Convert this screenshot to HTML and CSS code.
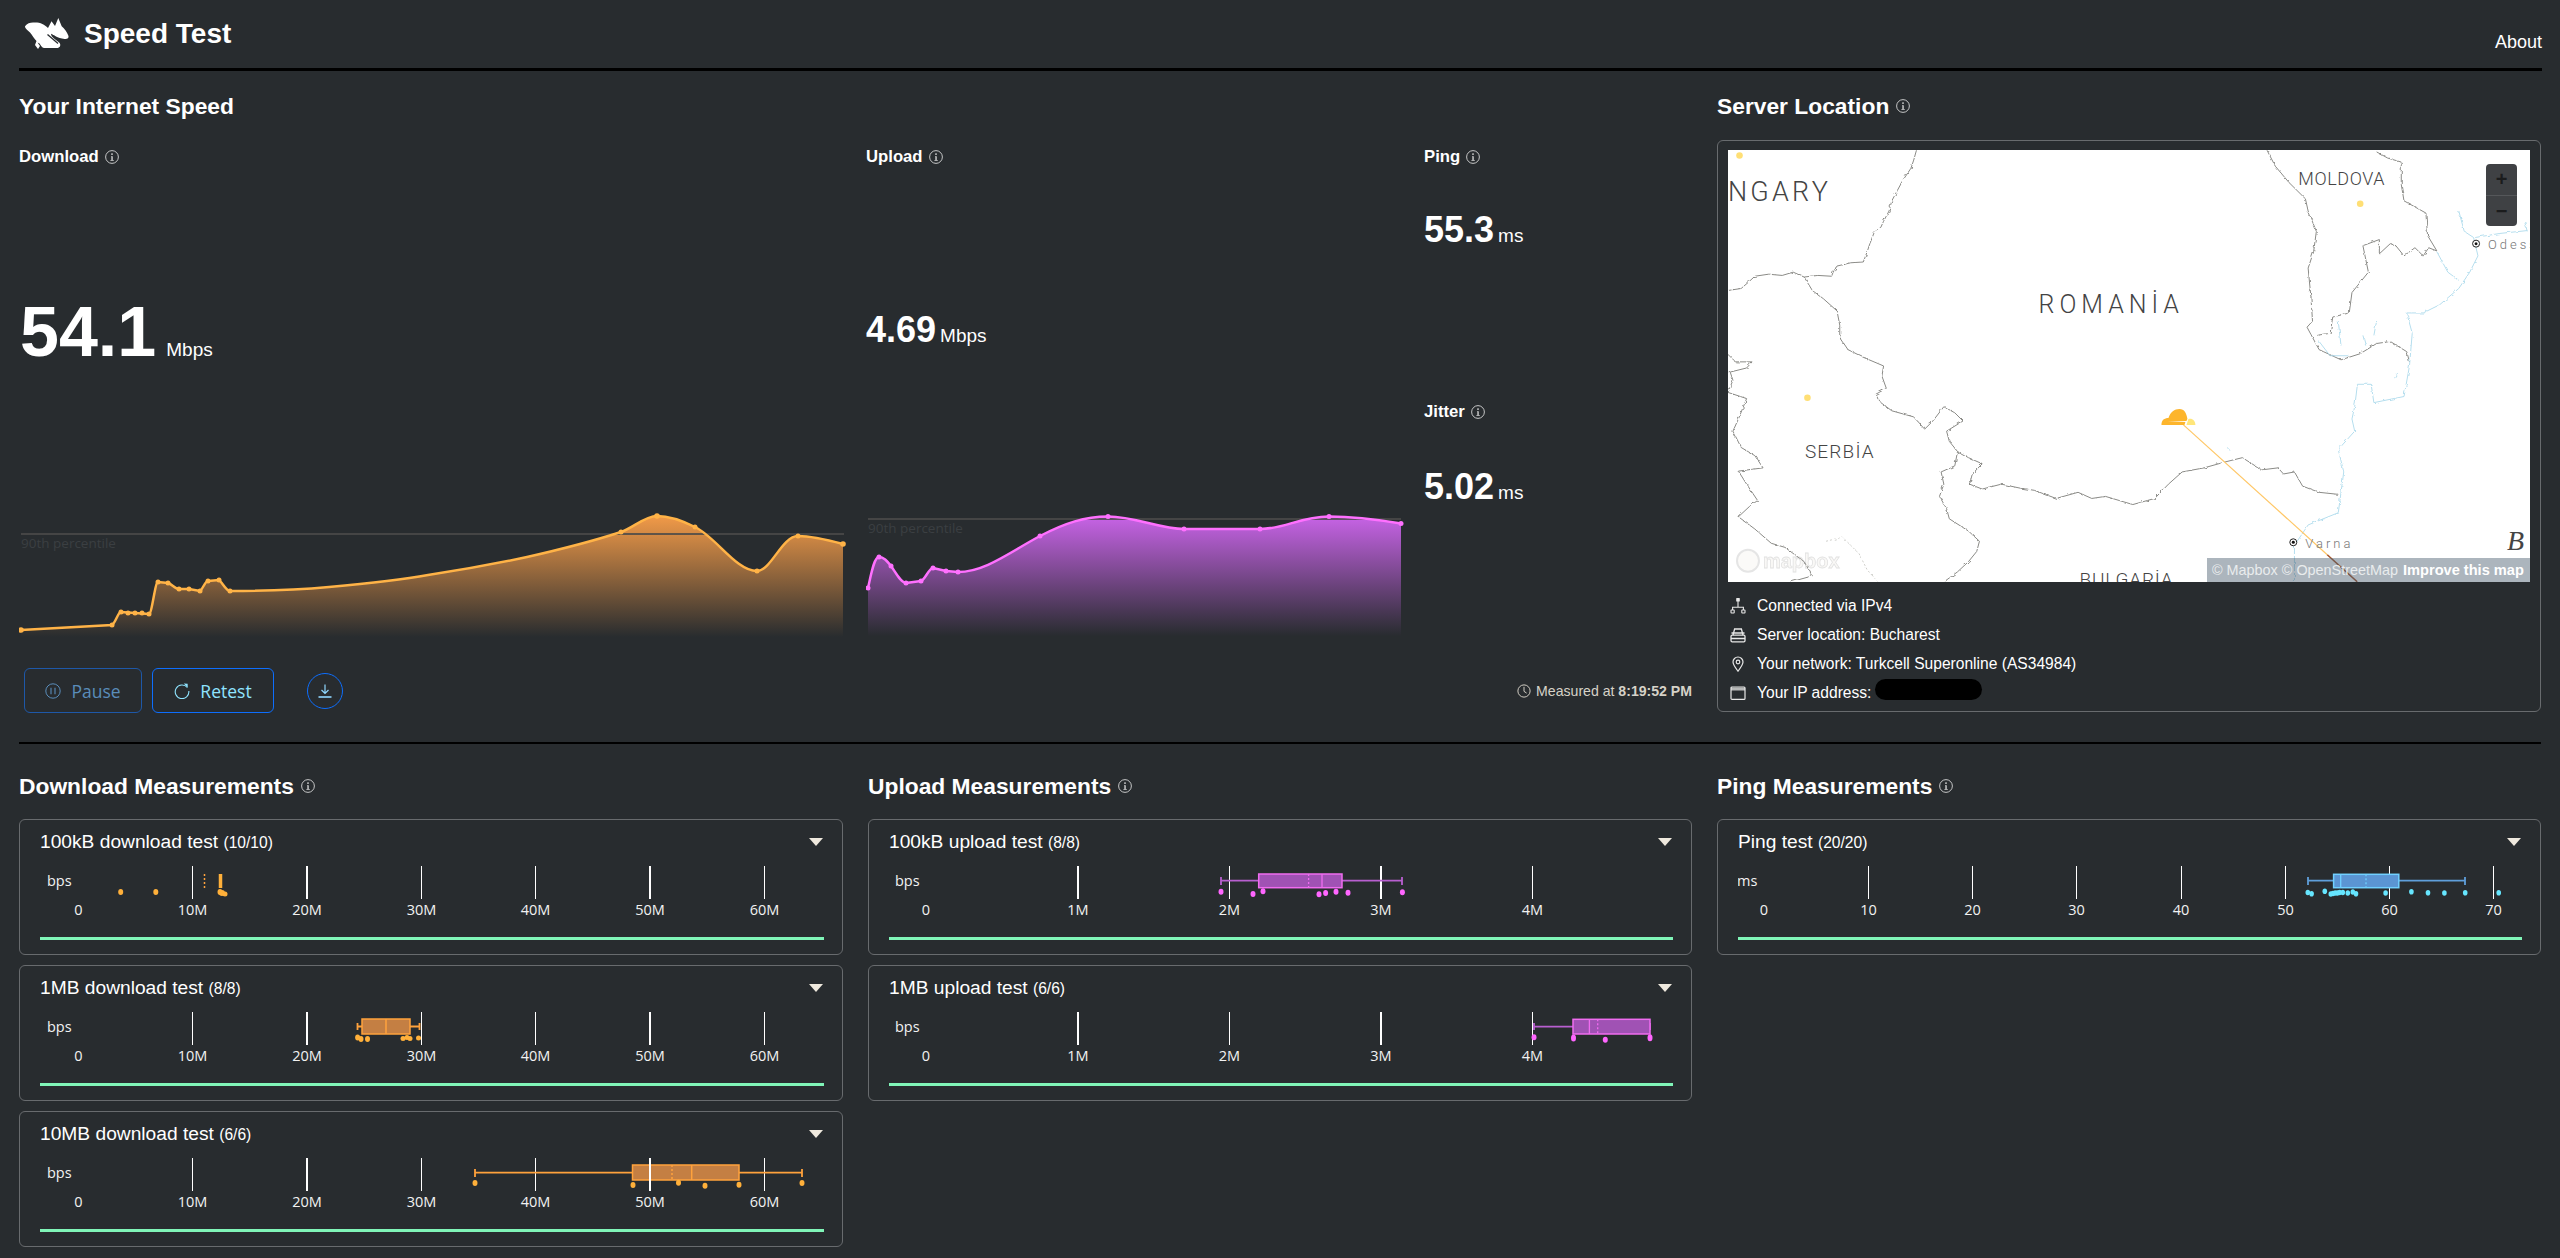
FILE: index.html
```html
<!DOCTYPE html>
<html lang="en">
<head>
<meta charset="utf-8">
<title>Speed Test</title>
<link rel="stylesheet" href="styles.css">
</head>
<body>
<svg class="sprite" xmlns="http://www.w3.org/2000/svg">
  <symbol id="i-info" viewBox="0 0 16 16"><circle cx="8" cy="8" r="7.3" fill="none" stroke="currentColor" stroke-width="1"/><path d="M7 7h1.8v4.4H10v.9H6.2v-.9h1.1V7.9H7z" fill="currentColor"/><circle cx="8" cy="4.7" r="1" fill="currentColor"/></symbol>
  <symbol id="i-tree" viewBox="0 0 16 16"><g fill="none" stroke="currentColor" stroke-width="1.1"><rect x="1" y="12" width="3.2" height="3" rx=".5"/><rect x="11.8" y="12" width="3.2" height="3" rx=".5"/><path d="M2.6 12V9.2h10.8V12M8 9.2V3"/></g><rect x="6.2" y="0" width="3.6" height="3.6" rx=".6" fill="currentColor"/></symbol>
  <symbol id="i-hdd" viewBox="0 0 16 16"><g fill="none" stroke="currentColor" stroke-width="1.3"><rect x="1" y="8.2" width="14" height="6.6" rx="1.2"/><path d="M1 11.5h14M3 8.2l1.6-6.2h6.8L13 8.2M1.500 6h13"/></g></symbol>
  <symbol id="i-pin" viewBox="0 0 16 16"><path d="M8 15.200C5.200 11.400 3 8.600 3 6a5 5 0 0 1 10 0c0 2.600-2.200 5.400-5 9.200z" fill="none" stroke="currentColor" stroke-width="1.200"/><circle cx="8" cy="6" r="1.800" fill="none" stroke="currentColor" stroke-width="1.200"/></symbol>
  <symbol id="i-window" viewBox="0 0 16 16"><rect x="1" y="2" width="14" height="12.400" rx="1" fill="none" stroke="currentColor" stroke-width="1.200"/><path d="M1 2.600h14v2.900H1z" fill="currentColor" opacity=".75"/></symbol>
  <symbol id="i-clock" viewBox="0 0 16 16"><circle cx="8" cy="8" r="7" fill="none" stroke="currentColor" stroke-width="1.100"/><path d="M8 3.200V8.400l3 2" fill="none" stroke="currentColor" stroke-width="1.100"/></symbol>
</svg>

<header class="nav">
  <svg class="logo" viewBox="0 0 44 31" xmlns="http://www.w3.org/2000/svg"><path fill="#fff" d="M0 8.300C2 5.500 5 4.500 8 4.500C15 4 19 6 23 10L26.500 3.300 30 8 33.300 0 36.700 8.300C39 10 42 14 43.500 18C44 20 42 21.500 39.500 21C36 20.500 33 19.500 31 18.500C29 17.300 27.500 16.500 26 15.800C26 17.500 27 19 29 20.500L33.500 24C35.500 25 35.500 27 35 28.500L33 30H19C17 30 15.500 27 14.500 25.500L12.500 24.500 15 28 13 31 10 27 11.500 23C9.500 21 7 17 5 14.500C3 12.500 0 11 0 8.300Z"/><path fill="none" stroke="#282c2f" stroke-width="1.300" d="M22.500 16.500L33 25.500"/></svg>
  <h1 class="brand">Speed Test</h1>
  <a class="about">About</a>
</header>

<main class="page">
  <section class="top">
    <div class="speed">
      <h2 class="heading">Your Internet Speed</h2>
      <div class="metrics">
        <div class="metric">
          <div class="label">Download <svg class="info"><use href="#i-info"/></svg></div>
          <div class="value value-xl">54.1<span class="unit">Mbps</span></div>
          <svg class="chart chart-dl" viewBox="19 510 828 130" xmlns="http://www.w3.org/2000/svg">
            <defs><linearGradient id="g-dl" x1="0" y1="0" x2="0" y2="1"><stop offset="0" stop-color="#f19a48"/><stop offset="1" stop-color="#f19a48" stop-opacity="0"/></linearGradient></defs>
            <path class="area" fill="url(#g-dl)" d="M21 630L112 625C116 622 118 612 121 612L149 614C152 614 155 582 158 582L168 583C172 584 175 589 179 589L189 589L200 591C203 589 205 581 208 581L219 580C222 582 226 591 230 591C263 591 296 590 329 587C362 584 395 581 428 575C461 570 494 564 527 557C558 550 590 542 621 532C633 528 645 516 657 516C670 516 683 521 695 527C716 537 736 571 757 571C771 571 782 536 798 536C813 536 828 540 843 544L843 637L21 637Z"/>
            <path class="pct" d="M21 534H844"/>
            <text class="pct-text" x="21" y="548">90th percentile</text>
            <path class="curve curve-dl" d="M21 630L112 625C116 622 118 612 121 612L149 614C152 614 155 582 158 582L168 583C172 584 175 589 179 589L189 589L200 591C203 589 205 581 208 581L219 580C222 582 226 591 230 591C263 591 296 590 329 587C362 584 395 581 428 575C461 570 494 564 527 557C558 550 590 542 621 532C633 528 645 516 657 516C670 516 683 521 695 527C716 537 736 571 757 571C771 571 782 536 798 536C813 536 828 540 843 544"/>
            <g class="pts-dl"><circle cx="21" cy="630" r="2.800"/><circle cx="112" cy="625" r="2.500"/><circle cx="121" cy="612" r="2.500"/><circle cx="128" cy="613" r="2.500"/><circle cx="135" cy="613" r="2.500"/><circle cx="142" cy="613" r="2.500"/><circle cx="149" cy="614" r="2.500"/><circle cx="158" cy="582" r="2.500"/><circle cx="168" cy="583" r="2.500"/><circle cx="179" cy="589" r="2.500"/><circle cx="189" cy="589" r="2.500"/><circle cx="200" cy="591" r="2.500"/><circle cx="208" cy="581" r="2.500"/><circle cx="219" cy="580" r="2.500"/><circle cx="230" cy="591" r="2.500"/><circle cx="621" cy="532" r="2.500"/><circle cx="657" cy="516" r="2.800"/><circle cx="695" cy="527" r="2.500"/><circle cx="757" cy="571" r="2.500"/><circle cx="798" cy="536" r="2.500"/><circle cx="843" cy="544" r="2.800"/></g>
          </svg>
        </div>
        <div class="metric">
          <div class="label">Upload <svg class="info"><use href="#i-info"/></svg></div>
          <div class="value value-lg up-value">4.69<span class="unit">Mbps</span></div>
          <svg class="chart chart-ul" viewBox="866 510 540 130" xmlns="http://www.w3.org/2000/svg">
            <defs><linearGradient id="g-ul" x1="0" y1="0" x2="0" y2="1"><stop offset="0" stop-color="#c763e6"/><stop offset="1" stop-color="#c763e6" stop-opacity="0"/></linearGradient></defs>
            <path class="area" fill="url(#g-ul)" d="M868 588C871 575 874 557 879 557C884 557 887 561 891 566C896 573 901 583 906 583L921 581C925 580 929 568 933 568L946 571L958 572C985 572 1010 552 1040 536C1065 523 1085 516.500 1108 516.500C1135 516.500 1160 529 1184 529L1260 529C1285 529 1300 516.500 1329 516.500C1355 516.500 1380 520 1401 523.500L1401 636L868 636Z"/>
            <path class="pct" d="M868 519H1401"/>
            <text class="pct-text" x="868" y="533">90th percentile</text>
            <path class="curve curve-ul" d="M868 588C871 575 874 557 879 557C884 557 887 561 891 566C896 573 901 583 906 583L921 581C925 580 929 568 933 568L946 571L958 572C985 572 1010 552 1040 536C1065 523 1085 516.500 1108 516.500C1135 516.500 1160 529 1184 529L1260 529C1285 529 1300 516.500 1329 516.500C1355 516.500 1380 520 1401 523.500"/>
            <g class="pts-ul"><circle cx="868" cy="588" r="2.500"/><circle cx="879" cy="557" r="2.500"/><circle cx="891" cy="566" r="2.500"/><circle cx="906" cy="583" r="2.500"/><circle cx="921" cy="581" r="2.500"/><circle cx="933" cy="568" r="2.500"/><circle cx="946" cy="571" r="2.500"/><circle cx="958" cy="572" r="2.500"/><circle cx="1040" cy="536" r="2.500"/><circle cx="1108" cy="516.500" r="2.500"/><circle cx="1184" cy="529" r="2.500"/><circle cx="1260" cy="529" r="2.500"/><circle cx="1329" cy="516.500" r="2.500"/><circle cx="1401" cy="523.500" r="2.500"/></g>
          </svg>
        </div>
        <div class="metric metric-ping">
          <div class="label">Ping <svg class="info"><use href="#i-info"/></svg></div>
          <div class="value value-lg ping-value">55.3<span class="unit">ms</span></div>
          <div class="label jitter-label">Jitter <svg class="info"><use href="#i-info"/></svg></div>
          <div class="value value-lg jitter-value">5.02<span class="unit">ms</span></div>
        </div>
      </div>
      <div class="actions">
        <button class="btn btn-dim"><svg class="btn-icon" viewBox="0 0 16 16"><circle cx="8" cy="8" r="7.200" fill="none" stroke="currentColor" stroke-width="1"/><path d="M6 4.800v6.400M10 4.800v6.400" stroke="currentColor" stroke-width="1.100"/></svg>Pause</button>
        <button class="btn btn-on"><svg class="btn-icon" viewBox="0 0 16 16"><path d="M13.300 4.500A6.800 6.800 0 1 0 14.800 8" fill="none" stroke="currentColor" stroke-width="1.100"/><path d="M9.800 0.500L13.600 0.800L13.800 4.800Z" fill="currentColor"/></svg>Retest</button>
        <button class="btn-round" aria-label="Download results"><svg class="round-icon" viewBox="0 0 16 16"><path d="M8 1.500V10M4.500 7L8 10.500L11.500 7" fill="none" stroke="currentColor" stroke-width="1.200"/><path d="M1.500 14h13" stroke="currentColor" stroke-width="1.600"/></svg></button>
        <div class="measured"><svg class="clock"><use href="#i-clock"/></svg>Measured at <b>8:19:52 PM</b></div>
      </div>
    </div>

    <div class="server">
      <h2 class="heading">Server Location <svg class="info"><use href="#i-info"/></svg></h2>
      <div class="server-card">
        <div class="map">
          <svg class="map-svg" viewBox="0 0 803 432" xmlns="http://www.w3.org/2000/svg">
            <defs><filter id="wiggle" x="-5%" y="-5%" width="110%" height="110%"><feTurbulence type="fractalNoise" baseFrequency=".09" numOctaves="2" seed="4"/><feDisplacementMap in="SourceGraphic" scale="7"/></filter></defs>
            <g transform="scale(.5485 .4082) translate(-51 -171)">
              <g filter="url(#wiggle)">
              <path class="bd" d="M395 171L390 195 385 215 370 245 360 270 350 295 345 320 335 345 330 360 318 372 310 400 305 420 298 445 275 447 250 455 243 470 240 480 215 478 190 482 170 470 150 478 125 475 100 480 88 495 75 510 51 515"/>
              <path class="bd" d="M190 482L205 515 225 535 250 565 255 600 255 630 270 660 300 680 335 700 332 725 340 755 320 770 330 790 350 810 390 825 410 855 425 835 445 800 465 815 480 835 450 860 455 885 470 910"/>
              <path class="bd" d="M470 910L490 925 515 940 497 965 492 990 515 1002 550 990 585 1000 610 1005 650 1025 690 1010 715 1025 740 1020 790 1040 830 1025 855 990 880 960 920 950 960 935 990 925 1025 955 1055 950 1065 965 1085 960 1100 995 1130 1010 1165 1015"/>
              <path class="bd" d="M470 910L465 945 440 960 445 990 437 1020 450 1050 455 1075 490 1105 510 1130 505 1155 490 1180 470 1205 445 1230"/>
              <path class="bd" d="M51 672L65 690 95 690 85 705 55 715 60 735 51 765 85 780 70 830 60 860 75 900 100 920 115 950 70 958 85 990 105 1030 90 1045 70 1070 100 1100 130 1135 155 1145 190 1180 205 1215 165 1230"/>
              <path class="bd" d="M1035 171L1050 210 1075 250 1105 290 1110 320 1125 370 1120 420 1110 460 1115 530 1118 590 1108 605 1130 660 1170 685 1205 670 1235 645 1260 640 1290 665 1295 690"/>
              <path class="bd" d="M1235 175L1255 190 1280 200 1280 255 1285 295 1325 325 1328 380 1345 418 1330 410 1320 430 1305 410 1285 430 1270 405 1260 400 1240 425 1240 390 1210 405 1220 470 1190 520 1185 570 1155 580 1150 620 1125 625"/>
              <path class="bd-dot" d="M230 1130L260 1120 290 1160 305 1200 325 1230"/>
              <path class="water" d="M1385 320L1395 370 1412 385 1420 430 1405 470 1385 510 1350 550 1320 570 1290 570 1300 620 1295 700 1285 775 1230 790 1225 745 1200 745 1195 800 1190 830 1195 860 1165 905 1175 960 1165 1060 1110 1090 1085 1140 1085 1230"/>
              <path class="water" d="M1415 385L1460 375 1510 368M1345 420L1365 470 1385 490M1165 590L1170 650M1235 590L1230 625M1210 625L1215 650M1130 640L1150 675 1185 675M1272 715L1268 730M1505 345L1510 370M962 900L968 908"/>
              </g>
              <ellipse class="city" cx="72" cy="184" rx="6" ry="8"/><ellipse class="city" cx="1205" cy="302" rx="6" ry="8"/><ellipse class="city" cx="196" cy="778" rx="6" ry="8"/>
            </g>
            <path class="route" d="M456 275L600 405"/><path class="route route-dark" d="M600 405L630 432"/>
            <text class="map-big" x="0" y="51">NGARY</text>
            <text class="map-ro" x="311" y="163">ROMANİA</text>
            <text class="map-md" x="571" y="35">MOLDOVA</text>
            <text class="map-rs" x="77" y="308">SERBİA</text>
            <text class="map-bg" x="352" y="436">BULGARİA</text>
            <circle class="dot-o" cx="749" cy="93.500" r="3.500"/><circle class="dot-i" cx="749" cy="93.500" r="1.500"/>
            <circle class="dot-o" cx="566" cy="392.500" r="3.500"/><circle class="dot-i" cx="566" cy="392.500" r="1.500"/>
            <text class="map-city" x="761" y="99">Odess</text>
            <text class="map-city" x="578" y="398">Varna</text>
            <text class="map-b" x="780" y="400">B</text>
            <path fill="#fdb52c" d="M434 275C434 270 437 268 441 268C443 262 447 259 452 259C457 259 459 263 460 269L459 271H440L458 272L457 275Z"/>
            <path fill="#ffe67a" d="M461 269C465 268 468 271 468 275H459L460 272Z"/>
            <g class="mb-logo"><circle cx="20" cy="411" r="11"/><text x="35" y="418">mapbox</text></g>
          </svg>
          <div class="zoom-ctl"><span class="zoom-btn">+</span><span class="zoom-btn zoom-minus">−</span></div>
          <div class="attrib"><span>© Mapbox</span> <span>© OpenStreetMap</span> <b>Improve this map</b></div>
        </div>
        <ul class="facts">
          <li><svg class="fact-icon"><use href="#i-tree"/></svg>Connected via IPv4</li>
          <li><svg class="fact-icon"><use href="#i-hdd"/></svg>Server location: Bucharest</li>
          <li><svg class="fact-icon"><use href="#i-pin"/></svg>Your network: Turkcell Superonline (AS34984)</li>
          <li><svg class="fact-icon"><use href="#i-window"/></svg>Your IP address: <span class="redact"></span></li>
        </ul>
      </div>
    </div>
  </section>

  <hr class="rule">

  <section class="bottom">
    <div class="col">
      <h2 class="heading">Download Measurements <svg class="info"><use href="#i-info"/></svg></h2>
      <article class="card">
        <div class="card-head"><span class="card-title">100kB download test <small>(10/10)</small></span><i class="caret"></i></div>
        <svg class="plot" viewBox="40 37 784 74" xmlns="http://www.w3.org/2000/svg">
          <text class="ax" x="47" y="67">bps</text>
          <path class="tick" d="M192.500 47V80M421.500 47V80M535.500 47V80M764.500 47V80"/><path class="tick thick" d="M307 47V80M650 47V80"/>
          <g class="ax-x"><text x="78.400" y="96">0</text><text x="192.500" y="96">10M</text><text x="307" y="96">20M</text><text x="421.500" y="96">30M</text><text x="535.500" y="96">40M</text><text x="650" y="96">50M</text><text x="764.500" y="96">60M</text></g>
          <path class="mean-o" d="M204.500 55V69"/><path class="solid-o" d="M220.500 55V69"/>
          <g class="dots-o"><ellipse cx="120.700" cy="73" rx="2.500" ry="3"/><ellipse cx="155.800" cy="73" rx="2.500" ry="3"/><ellipse cx="220" cy="73" rx="2.500" ry="3"/><ellipse cx="222" cy="74" rx="3" ry="3"/><ellipse cx="225" cy="75" rx="2.500" ry="2.500"/></g>
        </svg>
        <div class="progress"></div>
      </article>
      <article class="card">
        <div class="card-head"><span class="card-title">1MB download test <small>(8/8)</small></span><i class="caret"></i></div>
        <svg class="plot" viewBox="40 37 784 74" xmlns="http://www.w3.org/2000/svg">
          <text class="ax" x="47" y="67">bps</text>
          <path class="tick" d="M192.500 47V80M421.500 47V80M535.500 47V80M764.500 47V80"/><path class="tick thick" d="M307 47V80M650 47V80"/>
          <g class="ax-x"><text x="78.400" y="96">0</text><text x="192.500" y="96">10M</text><text x="307" y="96">20M</text><text x="421.500" y="96">30M</text><text x="535.500" y="96">40M</text><text x="650" y="96">50M</text><text x="764.500" y="96">60M</text></g>
          <path class="whisk-o" d="M357.500 58V65M357.500 61.500H362M410 61.500H419.500M419.500 58V65"/>
          <rect class="box-o" x="362" y="54" width="48" height="15"/>
          <path class="med-o" d="M386 54V69"/>
          <g class="dots-o"><ellipse cx="357.600" cy="72.500" rx="2.500" ry="3"/><ellipse cx="361" cy="74" rx="2.500" ry="3"/><ellipse cx="367.500" cy="74" rx="2.500" ry="3"/><ellipse cx="403" cy="73.500" rx="2.500" ry="2.500"/><ellipse cx="407" cy="72.500" rx="2.500" ry="2.500"/><ellipse cx="410" cy="73.500" rx="2.500" ry="2.500"/><ellipse cx="418.500" cy="73" rx="2.500" ry="2.500"/></g>
        </svg>
        <div class="progress"></div>
      </article>
      <article class="card">
        <div class="card-head"><span class="card-title">10MB download test <small>(6/6)</small></span><i class="caret"></i></div>
        <svg class="plot" viewBox="40 37 784 74" xmlns="http://www.w3.org/2000/svg">
          <text class="ax" x="47" y="67">bps</text>
          <path class="tick" d="M192.500 47V80M421.500 47V80M535.500 47V80M764.500 47V80"/><path class="tick thick" d="M307 47V80"/>
          <g class="ax-x"><text x="78.400" y="96">0</text><text x="192.500" y="96">10M</text><text x="307" y="96">20M</text><text x="421.500" y="96">30M</text><text x="535.500" y="96">40M</text><text x="650" y="96">50M</text><text x="764.500" y="96">60M</text></g>
          <path class="whisk-o" d="M475 58V66M475 61.700H632.500M739 61.700H802M802 58V66"/>
          <rect class="box-o" x="632.500" y="54" width="106.500" height="15"/>
          <path class="tick thick" d="M650 47V80"/>
          <path class="med-o" d="M691.700 54V69"/><path class="mean-o" d="M672 54V69"/>
          <g class="dots-o"><ellipse cx="475" cy="72" rx="2.500" ry="3"/><ellipse cx="633" cy="74" rx="2.500" ry="3"/><ellipse cx="678.500" cy="71.700" rx="2.500" ry="3"/><ellipse cx="705" cy="74.700" rx="2.500" ry="3"/><ellipse cx="739" cy="73.700" rx="2.500" ry="3"/><ellipse cx="802" cy="72" rx="2.500" ry="3"/></g>
        </svg>
        <div class="progress"></div>
      </article>
    </div>

    <div class="col">
      <h2 class="heading">Upload Measurements <svg class="info"><use href="#i-info"/></svg></h2>
      <article class="card">
        <div class="card-head"><span class="card-title">100kB upload test <small>(8/8)</small></span><i class="caret"></i></div>
        <svg class="plot" viewBox="889 37 784 74" xmlns="http://www.w3.org/2000/svg">
          <text class="ax" x="895" y="67">bps</text>
          <path class="tick" d="M1229.500 47V80M1532.500 47V80"/><path class="tick thick" d="M1078 47V80M1381 47V80"/>
          <g class="ax-x"><text x="926" y="96">0</text><text x="1078" y="96">1M</text><text x="1229.500" y="96">2M</text><text x="1381" y="96">3M</text><text x="1532.500" y="96">4M</text></g>
          <path class="whisk-p" d="M1221 58V66M1221 61.700H1258.700M1342 61.700H1402M1402 58V66"/>
          <rect class="box-p" x="1258.700" y="55" width="83.300" height="13.700"/>
          <path class="med-p" d="M1322 55V68.700"/><path class="mean-p" d="M1308.600 55V68.700"/>
          <g class="dots-p"><ellipse cx="1221" cy="72.700" rx="2.500" ry="3"/><ellipse cx="1253" cy="75" rx="2.500" ry="3"/><ellipse cx="1263" cy="72.300" rx="2.500" ry="3"/><ellipse cx="1319" cy="75.300" rx="2.500" ry="3"/><ellipse cx="1325.600" cy="74" rx="2.500" ry="3"/><ellipse cx="1336" cy="72.700" rx="2.500" ry="3"/><ellipse cx="1348" cy="73.700" rx="2.500" ry="3"/><ellipse cx="1402.400" cy="73.300" rx="2.500" ry="3"/></g>
        </svg>
        <div class="progress"></div>
      </article>
      <article class="card">
        <div class="card-head"><span class="card-title">1MB upload test <small>(6/6)</small></span><i class="caret"></i></div>
        <svg class="plot" viewBox="889 37 784 74" xmlns="http://www.w3.org/2000/svg">
          <text class="ax" x="895" y="67">bps</text>
          <path class="tick" d="M1229.500 47V80M1532.500 47V80"/><path class="tick thick" d="M1078 47V80M1381 47V80"/>
          <g class="ax-x"><text x="926" y="96">0</text><text x="1078" y="96">1M</text><text x="1229.500" y="96">2M</text><text x="1381" y="96">3M</text><text x="1532.500" y="96">4M</text></g>
          <path class="whisk-p" d="M1534 58V65M1534 61.700H1573M1650 58V65"/>
          <rect class="box-p" x="1573" y="54.300" width="77" height="14.700"/>
          <path class="med-p" d="M1589.400 54.300V69"/><path class="mean-p" d="M1597.700 54.300V69"/>
          <g class="dots-p"><ellipse cx="1534" cy="72.300" rx="2.500" ry="3"/><ellipse cx="1573.500" cy="73" rx="2.500" ry="3.500"/><ellipse cx="1605.300" cy="74.700" rx="2.500" ry="3"/><ellipse cx="1650" cy="72.700" rx="2.500" ry="3.500"/></g>
        </svg>
        <div class="progress"></div>
      </article>
    </div>

    <div class="col">
      <h2 class="heading">Ping Measurements <svg class="info"><use href="#i-info"/></svg></h2>
      <article class="card">
        <div class="card-head"><span class="card-title">Ping test <small>(20/20)</small></span><i class="caret"></i></div>
        <svg class="plot" viewBox="1738 37 784 74" xmlns="http://www.w3.org/2000/svg">
          <text class="ax" x="1737" y="67">ms</text>
          <path class="tick" d="M1868.500 47V80M1972.500 47V80M2076.500 47V80M2181.500 47V80M2285.500 47V80M2389.500 47V80M2493.500 47V80"/>
          <g class="ax-x"><text x="1764" y="96">0</text><text x="1868.500" y="96">10</text><text x="1972.500" y="96">20</text><text x="2076.500" y="96">30</text><text x="2181" y="96">40</text><text x="2285.500" y="96">50</text><text x="2389.500" y="96">60</text><text x="2493.500" y="96">70</text></g>
          <path class="whisk-b" d="M2308 58V66M2308 61.700H2333.600M2398.800 61.700H2465M2465 58V66"/>
          <rect class="box-b" x="2333.600" y="55.300" width="65.200" height="13.400"/>
          <path class="med-b" d="M2340.700 55.300V68.700"/><path class="mean-b" d="M2366 55.300V68.700"/>
          <g class="dots-b"><ellipse cx="2307.800" cy="73.500" rx="2.300" ry="2.800"/><ellipse cx="2311.600" cy="74.700" rx="2.300" ry="2.800"/><ellipse cx="2324.800" cy="72.300" rx="2.300" ry="2.800"/><ellipse cx="2330.800" cy="75" rx="2.300" ry="2.800"/><ellipse cx="2333" cy="74.500" rx="2.300" ry="2.800"/><ellipse cx="2335.200" cy="74" rx="2.300" ry="2.800"/><ellipse cx="2337.400" cy="74" rx="2.300" ry="2.800"/><ellipse cx="2339.600" cy="73.500" rx="2.300" ry="2.800"/><ellipse cx="2342.800" cy="73.500" rx="2.300" ry="2.800"/><ellipse cx="2347.800" cy="74" rx="2.300" ry="2.800"/><ellipse cx="2352.800" cy="73" rx="2.300" ry="2.800"/><ellipse cx="2356" cy="74.700" rx="2.300" ry="2.800"/><ellipse cx="2385.600" cy="74" rx="2.300" ry="2.800"/><ellipse cx="2411.400" cy="72.700" rx="2.300" ry="2.800"/><ellipse cx="2428" cy="73.700" rx="2.300" ry="2.800"/><ellipse cx="2444.400" cy="74" rx="2.300" ry="2.800"/><ellipse cx="2465.200" cy="73.700" rx="2.300" ry="2.800"/><ellipse cx="2498.700" cy="73.700" rx="2.300" ry="2.800"/></g>
        </svg>
        <div class="progress"></div>
      </article>
    </div>
  </section>
</main>
</body>
</html>
```
FILE: styles.css
```css
* { box-sizing: border-box; }
html, body { margin: 0; padding: 0; }
body {
  background: #282c2f;
  color: #fff;
  font-family: "Liberation Sans", Arial, sans-serif;
  min-height: 1258px;
  overflow: hidden;
}
.sprite { display: none; }

/* nav */
.nav {
  display: flex;
  align-items: center;
  height: 71px;
  margin: 0 18px 0 19px;
  border-bottom: 3px solid #000;
}
.logo { width: 44px; height: 31px; margin: -1px 0 0 6px; flex: none; }
.brand { margin: 0 0 0 15px; font-size: 28px; line-height: 34px; font-weight: 700; }
.about { margin: 16px 0 0 auto; font-size: 18px; line-height: 22px; color: #fff; }

/* page layout */
.page { padding: 21px 19px 0; }
.top, .bottom { display: grid; grid-template-columns: repeat(3, 824px); column-gap: 25px; }
.speed { grid-column: span 2; }
.server { grid-column: 3; }
.heading { margin: 0; font-size: 22.8px; line-height: 28px; font-weight: 700; display: flex; align-items: center; gap: 7px; }
.info { width: 14px; height: 14px; flex: none; color: #ddd; }

/* metrics */
.metrics { display: grid; grid-template-columns: 847px 557px 1fr; margin-top: 27px; }
.metric { display: flex; flex-direction: column; min-width: 0; }
.metric-ping { padding-left: 1px; }
.label { display: flex; align-items: center; gap: 6px; height: 20px; font-size: 16.7px; font-weight: 700; }
.value { font-weight: 700; white-space: nowrap; }
.value-xl { font-size: 70px; line-height: 80px; margin: 125px 0 0 1px; }
.value-lg { font-size: 36px; line-height: 40px; }
.unit { font-size: 19px; line-height: 1; font-weight: 400; margin-left: 10px; }
.value-lg .unit { margin-left: 4px; }
.up-value { margin-top: 143px; }
.ping-value { margin-top: 43px; }
.jitter-label { margin-top: 152px; }
.jitter-value { margin-top: 45px; }
.chart { display: block; height: 130px; }
.chart-dl { width: 828px; margin-top: 138px; }
.chart-ul { width: 540px; margin-top: 160px; }
.area { stroke: none; }
.pct { stroke: #4a4a49; stroke-width: 2; fill: none; opacity: .85; }
.pct-text { font-family: "Open Sans", sans-serif; font-size: 13.5px; fill: #3b3f42; }
.curve { fill: none; stroke-width: 2.5; }
.curve-dl { stroke: #ffb347; }
.curve-ul { stroke: #ff70ff; }
.pts-dl { fill: #ffb347; }
.pts-ul { fill: #ff70ff; }

/* actions */
.actions { display: flex; align-items: center; height: 45px; margin-top: 28px; padding-left: 5px; }
.btn {
  display: flex; align-items: center; justify-content: center; gap: 10px;
  height: 45px; background: transparent; border-radius: 6px; border: 1px solid;
  font-family: "Open Sans", sans-serif; font-size: 17.5px;
}
.btn-dim { width: 118px; border-color: #1e58a8; color: #5a8dba; }
.btn-on { width: 122px; margin-left: 10px; border-color: #0d6efd; color: #8fe4ff; }
.btn-icon { width: 16px; height: 16px; flex: none; }
.btn-round {
  display: flex; align-items: center; justify-content: center; padding: 0;
  width: 36px; height: 36px; margin-left: 33px; border-radius: 50%;
  background: transparent; border: 1px solid #0d6efd; color: #8fd8ff;
}
.round-icon { width: 16px; height: 16px; }
.measured { margin-left: auto; display: flex; align-items: center; white-space: pre; font-size: 14.1px; color: #d6d2c8; }
.measured b { font-weight: 700; }
.clock { width: 14px; height: 14px; margin-right: 5px; }

/* server card */
.server-card {
  margin-top: 20px; height: 572px; padding: 9px 10px 0;
  border: 1px solid #686b6e; border-radius: 6px;
}
.map { position: relative; height: 432px; background: #fff; overflow: hidden; }
.map-svg { display: block; width: 100%; height: 100%; }
.bd { fill: none; stroke: #8a8a86; stroke-width: 1; vector-effect: non-scaling-stroke; }
.bd-dot { fill: none; stroke: #cfcfcb; stroke-width: 1; stroke-dasharray: 2 2; vector-effect: non-scaling-stroke; }
.water { fill: none; stroke: #b5deee; stroke-width: 1; vector-effect: non-scaling-stroke; }
.city { fill: #ffdf75; }
.route { stroke: #ffc766; stroke-width: 1.2; fill: none; }
.route-dark { stroke: #a5562c; stroke-width: 1.6; }
.map-big, .map-ro, .map-md, .map-rs, .map-bg, .map-city { font-family: Roboto, sans-serif; font-weight: 300; fill: #444; }
.map-big { font-size: 27px; letter-spacing: 3.2px; }
.map-ro { font-size: 25px; letter-spacing: 5px; }
.map-md { font-size: 18px; letter-spacing: .6px; }
.map-rs { font-size: 19px; letter-spacing: 1.200px; }
.map-bg { font-size: 19px; letter-spacing: .8px; }
.map-city { font-size: 13px; letter-spacing: 3px; fill: #777; }
.map-b { font-family: "Liberation Serif", serif; font-style: italic; font-size: 28px; fill: #444; }
.dot-o { fill: #fff; stroke: #222; stroke-width: 1; }
.dot-i { fill: #111; }
.mb-logo { opacity: .25; }
.mb-logo circle { fill: #f2eee6; stroke: #999; stroke-width: 2; }
.mb-logo text { font-family: "Liberation Sans", sans-serif; font-weight: 700; font-size: 20px; fill: #e9e5dc; stroke: #8a8a8a; stroke-width: .8; }
.zoom-ctl {
  position: absolute; top: 14px; right: 13px; width: 31px; height: 62px;
  display: flex; flex-direction: column; background: #3f4144; border-radius: 4px;
}
.zoom-btn { flex: 1; display: flex; align-items: center; justify-content: center; color: #1b1c1d; font-size: 20px; font-weight: 700; line-height: 1; }
.zoom-minus { border-top: 1px solid #55575a; }
.attrib {
  position: absolute; left: 479px; right: 0; bottom: 0; height: 24px;
  display: flex; align-items: center; gap: 4px; padding-left: 5px; white-space: nowrap;
  background: rgba(72, 92, 108, .45); color: #e9eced; font-size: 14.4px;
}
.attrib b { color: #fff; font-size: 14.6px; margin-left: 1px; }
.facts { list-style: none; margin: 9px 0 0; padding: 0 0 0 2px; }
.fact-icon { width: 16px; height: 16px; margin-right: 11px; flex: none; color: #e8e8e8; }
.facts li { display: flex; align-items: center; height: 29px; font-size: 15.6px; white-space: pre; }
.redact { width: 107px; height: 21px; margin: -6px 0 0 -1px; background: #000; border-radius: 11px; }

/* rule */
.rule { height: 2px; margin: 29px 0 28px; background: #000; border: 0; }

/* measurement cards */
.col { display: flex; flex-direction: column; gap: 10px; }
.col .heading { margin-bottom: 9px; }
.card {
  height: 136px; padding: 9px 18px 0 20px;
  border: 1px solid #686b6e; border-radius: 6px;
}
.card-head { display: flex; align-items: center; justify-content: space-between; height: 25px; }
.card-title { font-size: 19.200px; line-height: 25px; }
.card-title small { font-size: 15.600px; }
.caret { width: 0; height: 0; margin-right: 1px; border-left: 7px solid transparent; border-right: 7px solid transparent; border-top: 8px solid #efe9de; }
.plot { display: block; width: 784px; height: 74px; margin-top: 2px; }
.progress { height: 3px; margin-top: 7px; width: 784px; background: #80f5b8; }
.ax, .ax-x text { font-family: "Open Sans", sans-serif; font-size: 14.500px; fill: #f2f2f2; }
.ax-x text { text-anchor: middle; }
.tick { stroke: #fff; stroke-width: 1; fill: none; }
.thick { stroke-width: 2; }
.whisk-o { stroke: #ffa23c; stroke-width: 1.800; fill: none; }
.box-o { fill: #c47f43; stroke: #ffa23c; stroke-width: 1.500; }
.med-o { stroke: #ffa23c; stroke-width: 1.500; fill: none; }
.mean-o { stroke: #ffa23c; stroke-width: 1.500; stroke-dasharray: 2 2; fill: none; }
.solid-o { stroke: #ffb03a; stroke-width: 3.500; fill: none; }
.dots-o { fill: #ffb03a; }
.whisk-p { stroke: #b85fd0; stroke-width: 1.800; fill: none; }
.box-p { fill: #a052b4; stroke: #f06cf0; stroke-width: 1.500; }
.med-p { stroke: #f06cf0; stroke-width: 1.300; fill: none; }
.mean-p { stroke: #f06cf0; stroke-width: 1.300; stroke-dasharray: 2 2; fill: none; }
.dots-p { fill: #ff66ff; }
.whisk-b { stroke: #5f9fdb; stroke-width: 1.800; fill: none; }
.box-b { fill: #5b95d3; stroke: #70d0ff; stroke-width: 1.500; }
.med-b { stroke: #70d0ff; stroke-width: 1.300; fill: none; }
.mean-b { stroke: #70d0ff; stroke-width: 1.300; stroke-dasharray: 2 2; fill: none; }
.dots-b { fill: #66e6ff; }
```
